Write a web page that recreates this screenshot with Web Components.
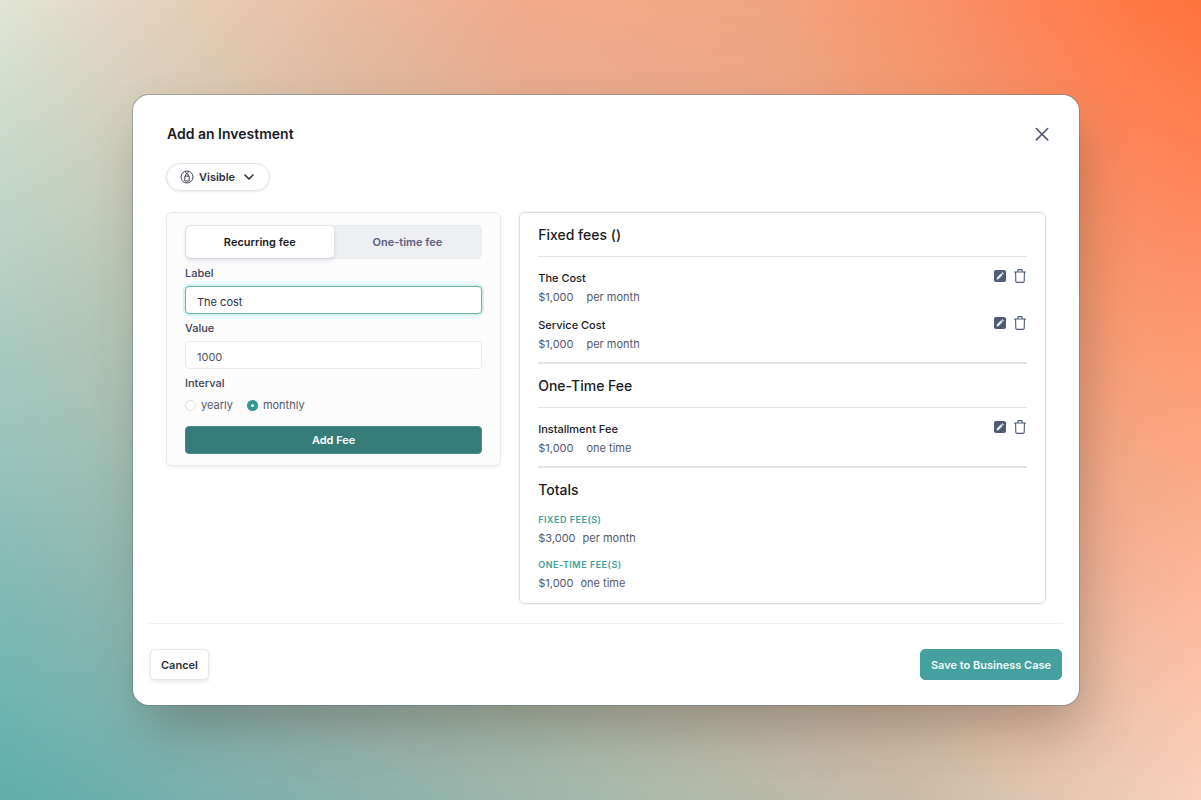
<!DOCTYPE html>
<html lang="en">
<head>
<meta charset="utf-8">
<meta name="viewport" content="width=device-width, initial-scale=1">
<title>Add an Investment</title>
<style>
  body {
    margin: 0;
    font-family: Inter, "Liberation Sans", sans-serif;
    font-size: 11px;
    color: #1a1b25;
    --teal: #319795;
    --teal-dark: #367d79;
    --teal-light: #45a1a0;
    --line: #e2e4e8;
    --muted: #545969;
    --label: #3c4257;
  }
</style>
</head>
<body>
<gradient-page>
  <modal-dialog heading="Add an Investment">
    <visibility-select slot="toolbar"></visibility-select>
    <fee-form></fee-form>
    <fee-summary>
      <fee-section heading="Fixed fees ()">
        <fee-item name="The Cost" amount="$1,000" interval="per month"></fee-item>
        <fee-item name="Service Cost" amount="$1,000" interval="per month"></fee-item>
      </fee-section>
      <fee-section heading="One-Time Fee">
        <fee-item name="Installment Fee" amount="$1,000" interval="one time"></fee-item>
      </fee-section>
      <fee-section heading="Totals" totals>
        <fee-total name="Fixed fee(s)" amount="$3,000" interval="per month"></fee-total>
        <fee-total name="One-time fee(s)" amount="$1,000" interval="one time"></fee-total>
      </fee-section>
    </fee-summary>
    <action-button slot="cancel">Cancel</action-button>
    <action-button slot="confirm" primary>Save to Business Case</action-button>
  </modal-dialog>
</gradient-page>

<script>
class BaseElement extends HTMLElement {
  constructor() {
    super();
    this.attachShadow({ mode: 'open' });
  }

  connectedCallback() {
    const template = document.createElement('template');
    template.innerHTML = `<style>* { box-sizing: border-box; }</style>` + this.render();
    this.shadowRoot.replaceChildren(template.content.cloneNode(true));
  }

  attr(name) {
    return this.getAttribute(name) || '';
  }
}

class GradientPage extends BaseElement {
  render() {
    return `
<style>
  :host {
    box-sizing: border-box;
    display: grid;
    min-height: 100vh;
    background: linear-gradient(95deg, #e1e5d6 0%, #e6d0b9 14%, #eabca1 27%, #f1ab8b 42%, #f2a583 60%, #f99268 74%, #ff7a47 88%, #ff6b35 100%);
  }
  /* bottom colours fade in over the top ones */
  .fade {
    grid-area: 1 / 1;
    background: linear-gradient(90deg, #5fadab 0%, #82b0ab 23%, #a6b8ac 50%, #c8bba6 75%, #fbd2be 100%);
    -webkit-mask-image: linear-gradient(transparent, #000);
    mask-image: linear-gradient(transparent, #000);
  }
  main {
    grid-area: 1 / 1;
    z-index: 1;
    padding: 95px 122px 95px 133px;
  }
</style>
<div class="fade"></div>
<main><slot></slot></main>`;
  }
}

class ModalDialog extends BaseElement {
  render() {
    return `
<style>
  :host {
    display: block;
    background: #fff;
    border-radius: 16px;
    box-shadow: 0 0 0 1px rgba(90, 120, 135, 0.45), 8px 26px 50px -6px rgba(70, 60, 50, 0.34);
  }
  header {
    display: flex;
    justify-content: space-between;
    align-items: center;
    padding: 28px 26px 0 34px;
  }
  h1 {
    margin: 0;
    font-size: 14px;
    line-height: 22px;
    font-weight: 600;
  }
  .close {
    display: flex;
    padding: 2px;
    border: 0;
    background: none;
    color: #4f566b;
    cursor: pointer;
  }
  .toolbar {
    padding: 18px 33px 0;
  }
  .content {
    display: grid;
    grid-template-columns: 7fr 11fr;
    gap: 18px;
    align-items: start;
    padding: 21px 33px 19px;
  }
  footer {
    display: flex;
    justify-content: space-between;
    margin: 0 16px;
    padding: 25px 1px;
    border-top: 1px solid #f0f1f3;
  }
</style>
<section role="dialog" aria-labelledby="title">
  <header>
    <h1 id="title">${this.attr('heading')}</h1>
    <button class="close" aria-label="Close">
      <svg width="18" height="18" viewBox="0 0 18 18" fill="none" stroke="currentColor" stroke-width="1.6" stroke-linecap="round"><path d="M3.3 3.5l11.4 11.4M14.7 3.5L3.3 14.9"/></svg>
    </button>
  </header>
  <div class="toolbar"><slot name="toolbar"></slot></div>
  <div class="content"><slot></slot></div>
  <footer>
    <slot name="cancel"></slot>
    <slot name="confirm"></slot>
  </footer>
</section>`;
  }
}

class VisibilitySelect extends BaseElement {
  render() {
    return `
<style>
  :host { display: flex; }
  label {
    display: flex;
    align-items: center;
    height: 28px;
    padding: 0 15px 0 13px;
    border: 1px solid var(--line);
    border-radius: 14px;
    background: #fff;
    box-shadow: 0 1px 2px rgba(60, 66, 87, 0.1);
    color: #2a2f3b;
  }
  select {
    appearance: none;
    margin: 0 6px 0 5px;
    padding: 0;
    border: 0;
    background: none;
    font: 600 11px/18px Inter, "Liberation Sans", sans-serif;
    color: inherit;
  }
</style>
<label>
  <svg width="14" height="14" viewBox="0 0 14 14" fill="none" stroke="currentColor" stroke-width="0.9"><circle cx="7" cy="7" r="6"/><path d="M4.8 6.2h4.4v4.8H4.8zM5.6 6V4.6L7 3.6l1.4 1V6M5.1 1.8l1.9 1.8 1.9-1.8"/></svg>
  <select aria-label="Visibility">
    <option selected>Visible</option>
    <option>Hidden</option>
  </select>
  <svg width="10" height="10" viewBox="0 0 10 10" fill="none" stroke="currentColor" stroke-width="1.6" stroke-linecap="round" stroke-linejoin="round"><path d="M1 3l4 4 4-4"/></svg>
</label>`;
  }
}

class FeeForm extends BaseElement {
  render() {
    return `
<style>
  :host {
    box-sizing: border-box;
    display: block;
    padding: 12px 18px 11px;
    border: 1px solid #e9eaed;
    border-radius: 6px;
    background: #fcfcfd;
    box-shadow: 0 2px 2px rgba(60, 66, 87, 0.07);
  }
  button {
    font: 600 11px/18px Inter, "Liberation Sans", sans-serif;
    cursor: pointer;
  }
  .tabs {
    display: grid;
    grid-template-columns: 1fr 1fr;
    height: 34px;
    border: 1px solid #e8eaed;
    border-radius: 5px;
    background: #eeeff3;
  }
  .tabs button {
    padding: 0;
    border: 0;
    border-radius: 5px;
    background: none;
    color: #5d6080;
  }
  .tabs button[aria-selected="true"] {
    background: #fff;
    color: #1a1b25;
    box-shadow: 0 2px 5px rgba(60, 66, 87, 0.16);
  }
  .label {
    display: block;
    padding: 1px 0 0;
    line-height: 26px;
    font-weight: 500;
    color: var(--label);
  }
  .field {
    display: block;
    width: 100%;
    height: 28px;
    padding: 3px 11px 0;
    border: 1px solid #e8eaed;
    border-radius: 4px;
    outline: 0;
    background: #fff;
    font: 400 11px/18px Inter, "Liberation Sans", sans-serif;
    color: #4f5362;
  }
  .field.active {
    border-color: #62b3b1;
    box-shadow: 0 0 0 2px #d9eeee;
    color: #2f333f;
  }
  fieldset {
    margin: 0;
    padding: 0;
    border: 0;
  }
  .options {
    display: flex;
    gap: 14px;
  }
  .options label {
    display: flex;
    align-items: center;
    gap: 5px;
    line-height: 18px;
    color: var(--muted);
  }
  .options input {
    appearance: none;
    width: 11px;
    height: 11px;
    margin: 1px 0 0;
    border: 1px solid #dddfe4;
    border-radius: 50%;
    background: #fff;
  }
  .options input:checked {
    border: 4px solid var(--teal);
  }
  .submit {
    display: block;
    width: 100%;
    height: 28px;
    margin-top: 12px;
    padding: 0;
    border: 1px solid #468d89;
    border-radius: 4px;
    background: var(--teal-dark);
    color: #fff;
  }
</style>
<form onsubmit="return false">
  <div class="tabs" role="tablist">
    <button type="button" role="tab" aria-selected="true">Recurring fee</button>
    <button type="button" role="tab" aria-selected="false">One-time fee</button>
  </div>
  <label class="label" for="label">Label</label>
  <input class="field active" id="label" type="text" value="The cost">
  <label class="label" for="value">Value</label>
  <input class="field" id="value" type="text" inputmode="numeric" value="1000">
  <fieldset>
    <legend class="label">Interval</legend>
    <div class="options">
      <label><input type="radio" name="interval" value="yearly">yearly</label>
      <label><input type="radio" name="interval" value="monthly" checked>monthly</label>
    </div>
  </fieldset>
  <button class="submit">Add Fee</button>
</form>`;
  }

  connectedCallback() {
    super.connectedCallback();
    const tabs = this.shadowRoot.querySelectorAll('[role=tab]');
    tabs.forEach(tab => tab.addEventListener('click', () => {
      tabs.forEach(t => t.setAttribute('aria-selected', t === tab));
    }));
  }
}

class FeeSummary extends BaseElement {
  render() {
    return `
<style>
  :host {
    box-sizing: border-box;
    display: block;
    padding: 0 18px 10px;
    border: 1px solid #dcdfe3;
    border-radius: 6px;
    box-shadow: 0 0 1px 1px rgba(60, 66, 87, 0.05);
  }
</style>
<slot></slot>`;
  }
}

class FeeSection extends BaseElement {
  render() {
    return `
<style>
  :host {
    display: block;
    border-bottom: 2px solid var(--line);
  }
  :host([totals]) { border: 0; }
  h2 {
    margin: 0;
    border-bottom: 1px solid var(--line);
    font-size: 14px;
    line-height: 43px;
    font-weight: 500;
  }
  .items {
    display: grid;
    gap: 8px;
    padding: 11px 0 8px;
  }
  :host([totals]) h2 { border: 0; }
  :host([totals]) .items { padding: 0; }
</style>
<h2>${this.attr('heading')}</h2>
<div class="items"><slot></slot></div>`;
  }
}

class FeeItem extends BaseElement {
  render() {
    return `
<style>
  :host {
    display: flex;
    justify-content: space-between;
    align-items: flex-start;
  }
  .name {
    line-height: 20px;
    font-weight: 500;
  }
  .price {
    display: flex;
    gap: 13px;
    line-height: 19px;
    color: var(--muted);
  }
  .actions {
    display: flex;
    gap: 6px;
    padding-top: 1px;
  }
  button {
    display: flex;
    padding: 0;
    border: 0;
    background: none;
    color: #4f5b76;
    cursor: pointer;
  }
</style>
<div>
  <div class="name">${this.attr('name')}</div>
  <div class="price"><span>${this.attr('amount')}</span><span>${this.attr('interval')}</span></div>
</div>
<div class="actions">
  <button aria-label="Edit ${this.attr('name')}">
    <svg width="14" height="14" viewBox="0 0 14 14"><rect x="1" y="1" width="12" height="12" rx="2" fill="currentColor"/><path d="M4.8 9.2l3.9-3.9" stroke="#fff" stroke-width="2.2"/><path d="M3.6 10.4l.5-2.1 1.6 1.6zM8.4 4l1.1-.8 1.3 1.3-.8 1.1z" fill="#fff"/></svg>
  </button>
  <button aria-label="Delete ${this.attr('name')}">
    <svg width="14" height="14" viewBox="0 0 14 14" fill="none" stroke="currentColor" stroke-width="1.1" stroke-linejoin="round"><path d="M1 3h12M4.8 3V1.5q0-.9.9-.9h2.6q.9 0 .9.9V3M2.6 3l.2 9.2q0 1.2 1.2 1.2h6q1.2 0 1.2-1.2l.2-9.2"/></svg>
  </button>
</div>`;
  }
}

class FeeTotal extends BaseElement {
  render() {
    return `
<style>
  :host { display: block; }
  .name {
    font-size: 9px;
    line-height: 18px;
    font-weight: 600;
    letter-spacing: 0.5px;
    text-transform: uppercase;
    color: #3f9f9c;
  }
  .price {
    display: flex;
    gap: 7px;
    line-height: 19px;
    color: var(--muted);
  }
</style>
<div class="name">${this.attr('name')}</div>
<div class="price"><span>${this.attr('amount')}</span><span>${this.attr('interval')}</span></div>`;
  }
}

class ActionButton extends BaseElement {
  render() {
    return `
<style>
  :host { display: block; }
  button {
    height: 31px;
    padding: 0 10px;
    border: 1px solid #e6e8eb;
    border-radius: 5px;
    background: #fff;
    box-shadow: 0 2px 4px rgba(60, 66, 87, 0.12);
    font: 600 11px/18px Inter, "Liberation Sans", sans-serif;
    color: #2a2f3b;
    cursor: pointer;
  }
  :host([primary]) button {
    border-color: var(--teal-light);
    background: var(--teal-light);
    box-shadow: none;
    color: #f2fbfa;
  }
</style>
<button><slot></slot></button>`;
  }
}

customElements.define('gradient-page', GradientPage);
customElements.define('modal-dialog', ModalDialog);
customElements.define('visibility-select', VisibilitySelect);
customElements.define('fee-form', FeeForm);
customElements.define('fee-summary', FeeSummary);
customElements.define('fee-section', FeeSection);
customElements.define('fee-item', FeeItem);
customElements.define('fee-total', FeeTotal);
customElements.define('action-button', ActionButton);
</script>
</body>
</html>
